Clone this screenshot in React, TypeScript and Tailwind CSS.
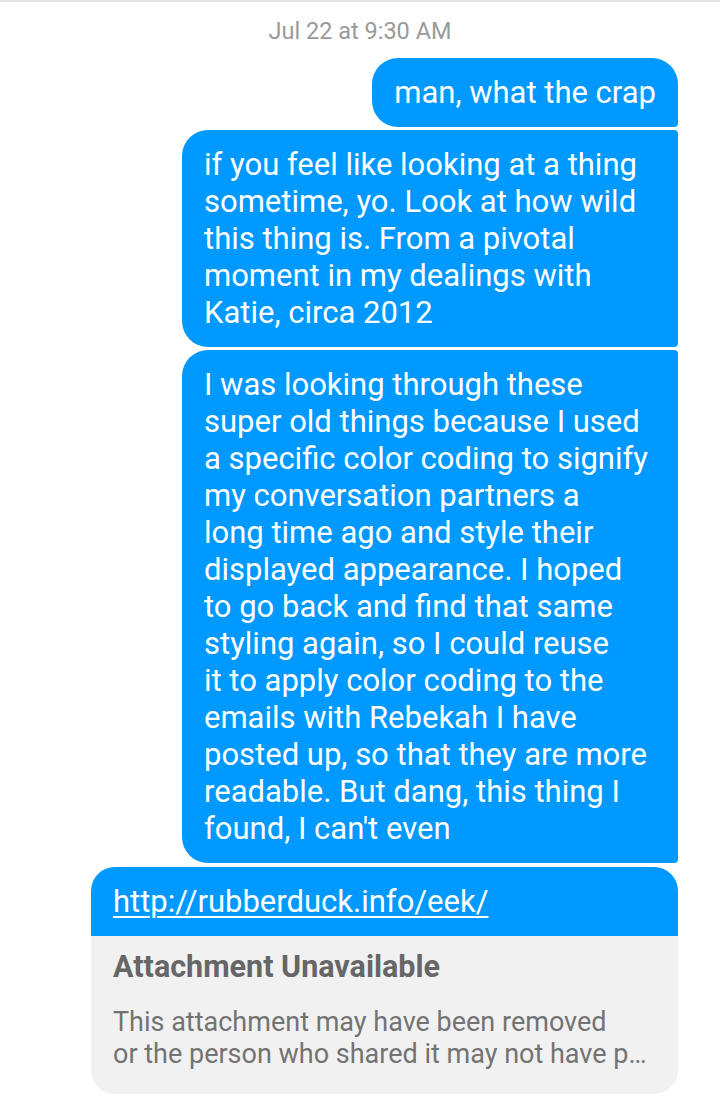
import React from "react";

const font = { fontFamily: "Roboto, 'Noto Sans', sans-serif" };

const longLines = [
  "I was looking through these",
  "super old things because I used",
  "a specific color coding to signify",
  "my conversation partners a",
  "long time ago and style their",
  "displayed appearance. I hoped",
  "to go back and find that same",
  "styling again, so I could reuse",
  "it to apply color coding to the",
  "emails with Rebekah I have",
  "posted up, so that they are more",
  "readable. But dang, this thing I",
  "found, I can't even",
];

export default function App() {
  return (
    <div className="w-[720px] h-[1106px] bg-white overflow-hidden" style={font}>
      <div className="h-[2px] bg-[#e2e2e2]" />
      <div className="pt-[17px] text-center text-[23.5px] leading-[24px] text-[#9a9a9a]">
        Jul 22 at 9:30 AM
      </div>
      <div className="flex flex-col items-end pr-[42px] pt-[15px] gap-[3px]">
        <div className="bg-[#0099ff] text-white text-[31px] leading-[37px] px-[22px] py-[16px] rounded-tl-[26px] rounded-tr-[26px] rounded-bl-[26px] rounded-br-[4px]">
          man, what the crap
        </div>
        <div className="bg-[#0099ff] text-white text-[31px] leading-[37px] px-[22px] py-[16px] max-w-[496px] rounded-tl-[26px] rounded-bl-[26px] rounded-tr-[4px] rounded-br-[4px]">
          if you feel like looking at a thing sometime, yo. Look at how wild this thing is. From a pivotal moment in my dealings with Katie, circa 2012
        </div>
        <div className="bg-[#0099ff] text-white text-[31px] leading-[37px] px-[22px] py-[16px] w-[496px] whitespace-nowrap rounded-tl-[26px] rounded-bl-[26px] rounded-tr-[4px] rounded-br-[4px]">
          {longLines.map((l, i) => (
            <div key={i}>{l}</div>
          ))}
        </div>
        <div className="w-[587px] mt-[1px] rounded-[24px] overflow-hidden">
          <div className="bg-[#0099ff] text-white text-[31px] leading-[37px] px-[22px] pt-[16px] pb-[16px]">
            <span className="underline decoration-[1.5px] underline-offset-[4px]">http://rubberduck.info/eek/</span>
          </div>
          <div className="bg-[#f1f1f1] px-[22px] pt-[14px] pb-[24px]">
            <div className="text-[30.5px] leading-[34px] font-bold text-[#666666]">
              Attachment Unavailable
            </div>
            <div className="mt-[22px] text-[27px] leading-[32px] text-[#737373] whitespace-nowrap">
              <div>This attachment may have been removed</div>
              <div>or the person who shared it may not have p…</div>
            </div>
          </div>
        </div>
      </div>
    </div>
  );
}
